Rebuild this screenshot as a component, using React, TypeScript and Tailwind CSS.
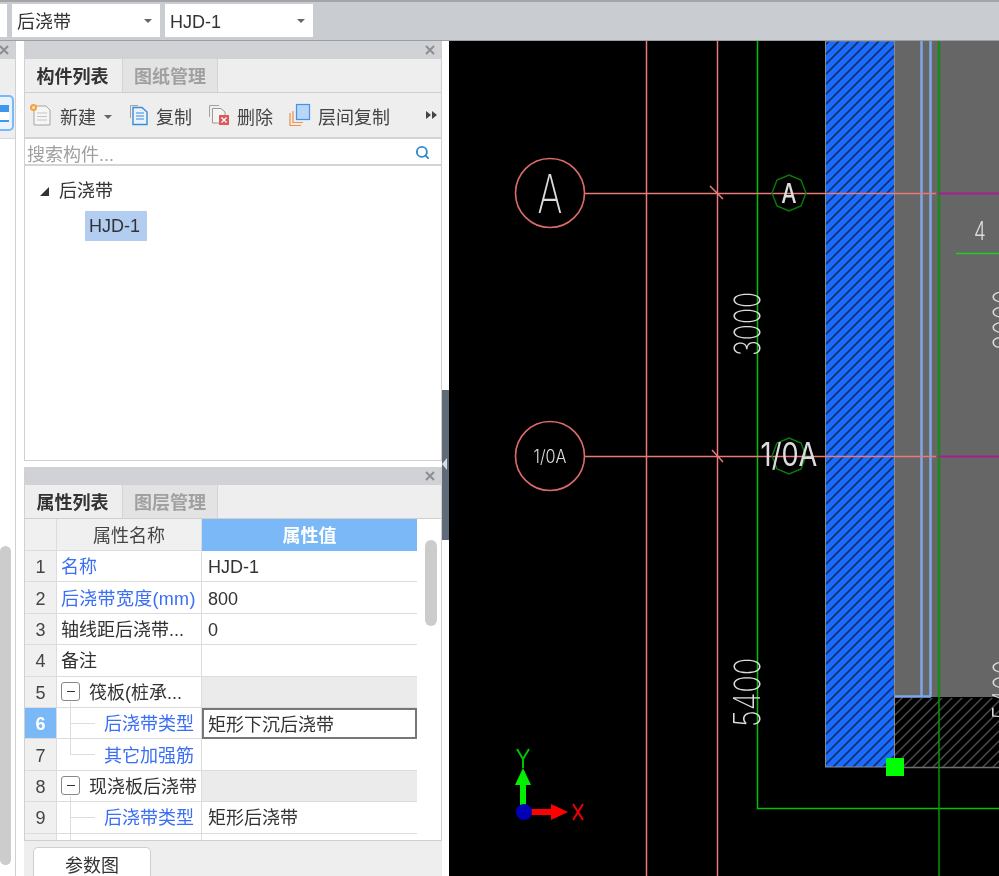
import React from 'react';
import { Search } from 'lucide-react';

const Close = () => (
    <svg width="10" height="10" viewBox="0 0 10 10" className="shrink-0">
        <path d="M1 1 L9 9 M9 1 L1 9" stroke="#8b8e93" strokeWidth="2" />
    </svg>
);

const Caret = () => <span className="w-0 h-0 border-x-[4px] border-x-transparent border-t-[4px] border-t-[#666]" />;

const Combo = ({ label, className }: { label: string, className: string }) => (
    <div className={`h-[33px] bg-white flex items-center justify-between pl-[5px] pr-[8px] text-[#333] ${className}`}>
        <span className="pt-[2px]">{label}</span>
        <Caret />
    </div>
);

const NewIcon = () => (
    <svg width="24" height="24" viewBox="0 0 24 24">
        <path d="M5 3 H17 L21 7 V22 H5 Z" fill="#f6f6f6" stroke="#a4a4a4" />
        <path d="M8 10 H18 M8 13.5 H18 M8 17 H18" stroke="#c4c4c4" />
        <circle cx="4.5" cy="4.5" r="3.5" fill="#f3a23c" />
        <circle cx="4.5" cy="4.5" r="1.5" fill="#fde6b0" />
    </svg>
);

const CopyIcon = () => (
    <svg width="20" height="22" viewBox="0 0 20 22">
        <path d="M1.5 14 V1.5 H9" fill="none" stroke="#9aa3ad" />
        <path d="M4 3.5 H13 L18 8 V20.5 H4 Z" fill="#eaf3fc" stroke="#3b8bd9" strokeWidth="1.4" />
        <path d="M7 9 H15 M7 12 H15 M7 15 H15" stroke="#3b8bd9" />
    </svg>
);

const DeleteIcon = () => (
    <svg width="22" height="22" viewBox="0 0 22 22">
        <path d="M1.5 13 V1.5 H11" fill="none" stroke="#a0a4a8" />
        <path d="M4.5 4.5 H13 L17 8 V19 H4.5 Z" fill="#f4f4f4" stroke="#9a9a9a" />
        <rect x="11" y="11" width="10" height="10" fill="#dd5a5a" />
        <path d="M13.5 13.5 L18.5 18.5 M18.5 13.5 L13.5 18.5" stroke="#fff" strokeWidth="1.3" />
    </svg>
);

const FloorCopyIcon = () => (
    <svg width="22" height="24" viewBox="0 0 22 24">
        <path d="M1 10 V22.5 H12" fill="none" stroke="#f0904a" strokeWidth="1.2" />
        <path d="M4 8 V19.5 H14" fill="none" stroke="#f0904a" strokeWidth="1.2" />
        <rect x="7.5" y="1.5" width="13" height="15" fill="#b7d6fb" stroke="#4a90e2" strokeWidth="1.2" />
    </svg>
);

const ToolItem = ({ icon, label, className }: { icon: React.ReactNode, label: string, className: string }) => (
    <div className={`flex items-center ${className}`}>
        {icon}
        <span className="ml-[7px] pt-[5px] text-[#444]">{label}</span>
    </div>
);

const PanelTabs = ({ active, other }: { active: string, other: string }) => (
    <div className="h-[34px] bg-[#eeeeee] border-b border-[#cfcfcf] flex">
        <div className="w-[95px] pt-[2px] flex items-center justify-center font-bold text-[#333]">{active}</div>
        <div className="ml-[2px] w-[96px] pt-[2px] bg-[#e3e3e3] border-x border-[#d4d4d4] flex items-center justify-center font-bold text-[#a0a0a0]">{other}</div>
    </div>
);

const TitleBar = () => (
    <div className="h-[18px] bg-[#d0d2d6] flex items-center justify-end pr-[6px]">
        <Close />
    </div>
);

type Row = {
    name?: string;
    value?: string;
    blue?: boolean;
    kind?: 'group' | 'child' | 'lastChild';
    active?: boolean;
};

const rows: Row[] = [
    { name: '名称', value: 'HJD-1', blue: true },
    { name: '后浇带宽度(mm)', value: '800', blue: true },
    { name: '轴线距后浇带...', value: '0' },
    { name: '备注' },
    { name: '筏板(桩承...', kind: 'group' },
    { name: '后浇带类型', value: '矩形下沉后浇带', blue: true, kind: 'child', active: true },
    { name: '其它加强筋', blue: true, kind: 'lastChild' },
    { name: '现浇板后浇带', kind: 'group' },
    { name: '后浇带类型', value: '矩形后浇带', blue: true, kind: 'child' },
    { kind: 'child' },
];

const TableRow = ({ row, index }: { row: Row, index: number }) => {
    const group = row.kind === 'group';
    const nested = row.kind === 'child' || row.kind === 'lastChild';
    return (
        <div className="h-[31.4px] shrink-0 flex">
            <div className={`w-[32px] shrink-0 pt-[2px] border-r border-b border-[#dcdcdc] flex items-center justify-center ${row.active ? 'bg-[#7ab8f8] text-white font-bold' : 'bg-[#f0f0f0] text-[#444]'}`}>
                {row.name ? index + 1 : ''}
            </div>
            <div className={`relative w-[145px] shrink-0 border-r border-b border-[#dcdcdc] flex items-center whitespace-nowrap ${row.blue ? 'text-[#3b6ef5]' : 'text-[#333]'} ${nested ? 'pl-[47px]' : 'pl-[4px]'}`}>
                {group && (
                    <span className="mr-[9px] w-[19px] h-[19px] shrink-0 rounded-[3px] border border-[#888] flex items-center justify-center">
                        <span className="w-[8px] h-px bg-[#333]" />
                    </span>
                )}
                {group && <span className="absolute left-[13px] top-[25px] h-[7px] w-px bg-[#dddddd]" />}
                {nested && (
                    <>
                        <span className={`absolute left-[13px] top-0 w-px bg-[#dddddd] ${row.kind === 'lastChild' ? 'h-[16px]' : 'h-full'}`} />
                        {row.name && <span className="absolute left-[13px] top-[15px] h-px w-[25px] bg-[#dddddd]" />}
                    </>
                )}
                <span className={`pt-[2px] ${row.name === '后浇带宽度(mm)' ? 'tracking-[0.3px]' : ''}`}>{row.name}</span>
            </div>
            <div className={`w-[215px] shrink-0 flex items-center text-[#333] whitespace-nowrap ${group ? 'bg-[#ebebeb]' : 'bg-white'} ${row.active ? 'border-2 border-[#777777] pl-[4px]' : 'border-b border-[#dcdcdc] pl-[6px]'}`}>
                <span className="pt-[2px]">{row.value}</span>
            </div>
        </div>
    );
};

const Cad = () => (
    <svg viewBox="449 41 550 835" className="w-full h-full block">
        <defs>
            <pattern id="hatchBlue" patternUnits="userSpaceOnUse" width="10" height="10">
                <rect width="10" height="10" fill="#1a6cff" />
                <path d="M-1 1 L1 -1 M0 10 L10 0 M9 11 L11 9" stroke="#14306a" strokeWidth="1.7" />
            </pattern>
            <pattern id="hatchDark" patternUnits="userSpaceOnUse" width="10" height="10">
                <path d="M-1 1 L1 -1 M0 10 L10 0 M9 11 L11 9" stroke="#4a4a4a" strokeWidth="1.5" />
            </pattern>
        </defs>

        <rect x="895" y="41" width="104" height="656" fill="#666666" />
        <rect x="825.5" y="41" width="69" height="726" fill="url(#hatchBlue)" stroke="#8a8a8a" />
        <rect x="895" y="698" width="104" height="69" fill="url(#hatchDark)" />
        <path d="M894 767.5 H999" stroke="#6e6e6e" strokeWidth="1.5" />
        <path d="M921.5 41 V697 M930.5 41 V697 M895 696.5 H931" stroke="#7fa6e8" strokeWidth="2.5" fill="none" />

        <path d="M646.5 41 V876 M717.5 41 V876" stroke="#e87a7a" strokeWidth="1.5" />
        <path d="M757.5 41 V808.5 H999" stroke="#00c000" strokeWidth="1.5" fill="none" />
        <path d="M939 41 V697" stroke="#178a17" strokeWidth="2.5" />
        <path d="M939 697 V876" stroke="#009a00" strokeWidth="1.5" />
        <path d="M956 253.5 H999" stroke="#22cc22" strokeWidth="1.6" />

        <path d="M585 193.5 H936 M585 456.5 H936" stroke="#e87a7a" strokeWidth="1.6" />
        <path d="M938 193.5 H999 M938 456.5 H999" stroke="#a5208f" strokeWidth="1.8" />
        <path d="M710 186 L723 199 M712 450 L723 462" stroke="#e87a7a" strokeWidth="1.5" />
        <circle cx="550" cy="193" r="34.5" fill="none" stroke="#dc6c6c" strokeWidth="1.6" />
        <circle cx="550" cy="456" r="34.5" fill="none" stroke="#dc6c6c" strokeWidth="1.6" />
        <path d="M789 175 L801 180 L806 193 L801 206 L789 211 L777 206 L772 193 L777 180 Z" fill="none" stroke="#0a7a0a" strokeWidth="1.4" />
        <path d="M789 438 L801 443 L806 456 L801 469 L789 474 L777 469 L772 456 L777 443 Z" fill="none" stroke="#0a7a0a" strokeWidth="1.4" />

        <g fill="#dcdcdc" className="font-['Inter',sans-serif]">
            <text x="550" y="213" textAnchor="middle" fontSize="54" fontWeight="200" transform="translate(550 0) scale(0.7 1) translate(-550 0)">A</text>
            <text x="550" y="463" textAnchor="middle" fontSize="18" fontWeight="300" transform="translate(550 0) scale(0.9 1) translate(-550 0)">1/0A</text>
            <text x="789" y="203" textAnchor="middle" fontSize="27" fontWeight="500" transform="translate(789 0) scale(0.8 1) translate(-789 0)">A</text>
            <text x="789" y="466" textAnchor="middle" fontSize="32" fontWeight="400" transform="translate(789 0) scale(0.85 1) translate(-789 0)">1/0A</text>
            <text x="980" y="240" textAnchor="middle" fontSize="26" fontWeight="300" transform="translate(980 0) scale(0.72 1) translate(-980 0)">4</text>
            <text transform="translate(760 356) rotate(-90) scale(0.74 1)" fontSize="36" fontWeight="200">3000</text>
            <text transform="translate(760 727) rotate(-90) scale(0.8 1)" fontSize="36" fontWeight="200">5400</text>
            <text transform="translate(1019 350) rotate(-90) scale(0.7 1)" fontSize="36" fontWeight="200">3000</text>
            <text transform="translate(1019 720) rotate(-90) scale(0.7 1)" fontSize="36" fontWeight="200">5400</text>
        </g>

        <rect x="886" y="758" width="18" height="18" fill="#00ff00" />

        <path d="M523 805 V782" stroke="#00f000" strokeWidth="6" />
        <path d="M523 768 L531 785 H515 Z" fill="#00f000" />
        <path d="M517 749 L523 759 L529 749 M523 759 V768" fill="none" stroke="#00c000" strokeWidth="2" />
        <path d="M530 812 H553" stroke="#ff0000" strokeWidth="6" />
        <path d="M568 812 L551 804 V820 Z" fill="#ff0000" />
        <circle cx="524" cy="812" r="8" fill="#0000b4" />
        <path d="M573 804 L583 820 M583 804 L573 820" stroke="#f00000" strokeWidth="2" />
    </svg>
);

export default function App() {
    return (
        <div className="w-[999px] h-[876px] overflow-hidden flex flex-col bg-white text-[18px] leading-none blur-[0.4px] font-['Liberation_Sans','Noto_Sans_CJK_SC',sans-serif]">
            <div className="h-[41px] shrink-0 bg-[#c9ccd1] border-t-[2px] border-t-[#a3a5a8] border-b border-b-[#9c9ea1] flex items-center gap-[5px] pb-[1px]">
                <div className="w-[7px] h-[33px] bg-white" />
                <Combo label="后浇带" className="w-[148px]" />
                <Combo label="HJD-1" className="w-[148px]" />
            </div>

            <div className="flex-1 min-h-0 flex">
                <div className="w-[16px] shrink-0 border-r border-[#d0d0d0] flex flex-col overflow-hidden">
                    <div className="h-[18px] bg-[#d0d2d6] flex items-center justify-end pr-[6px]">
                        <Close />
                    </div>
                    <div className="h-[80px] bg-[#eeeeee] border-b border-[#d8d8d8] pt-[37px]">
                        <div className="w-[14px] h-[36px] -mt-[1px] rounded-r-[5px] border-2 border-l-0 border-[#7ab8f8] bg-[#e8f3fe] flex flex-col justify-center">
                            <div className="w-[9px] h-[17px] border-t-[7px] border-t-[#3f97ec] border-b-2 border-b-[#3f97ec] bg-white" />
                        </div>
                    </div>
                    <div className="mt-[407px] w-[11px] h-[319px] rounded-full bg-[#cccccc]" />
                </div>

                <div className="w-[8px] shrink-0" />

                <div className="w-[418px] shrink-0 flex flex-col">
                    <div className="h-[419px] shrink-0 flex flex-col border-x border-[#d0d0d0]">
                        <TitleBar />
                        <PanelTabs active="构件列表" other="图纸管理" />
                        <div className="h-[46px] bg-[#eeeeee] border-b-2 border-[#d4d4d6] flex items-center">
                            <ToolItem icon={<NewIcon />} label="新建" className="ml-[4px]" />
                            <span className="ml-[8px] flex pt-[3px]"><Caret /></span>
                            <ToolItem icon={<CopyIcon />} label="复制" className="ml-[17px]" />
                            <ToolItem icon={<DeleteIcon />} label="删除" className="ml-[16px]" />
                            <ToolItem icon={<FloorCopyIcon />} label="层间复制" className="ml-[16px]" />
                            <div className="ml-[36px] flex">
                                <span className="w-0 h-0 border-y-[4px] border-y-transparent border-l-[5px] border-l-[#444]" />
                                <span className="ml-[1px] w-0 h-0 border-y-[4px] border-y-transparent border-l-[5px] border-l-[#444]" />
                            </div>
                        </div>
                        <div className="h-[27px] bg-white border-b-2 border-[#d4d4d6] flex items-center justify-between pl-[2px] pr-[11px]">
                            <span className="pt-[7px] text-[#a0a0a0]">搜索构件...</span>
                            <Search size={15} strokeWidth={3} className="mt-[2px] text-[#2d8cc8]" />
                        </div>
                        <div className="flex-1 bg-white pl-[15px] pt-[16px]">
                            <div className="flex items-center h-[18px]">
                                <span className="w-0 h-0 border-l-[9px] border-l-transparent border-b-[9px] border-b-[#333]" />
                                <span className="ml-[10px] text-[#333]">后浇带</span>
                            </div>
                            <div className="mt-[11px] ml-[45px] w-[62px] h-[30px] bg-[#b3cdf0] flex items-center pl-[4px] text-[#333]">HJD-1</div>
                        </div>
                    </div>

                    <div className="h-[7px] shrink-0 border-t border-[#d0d0d0]" />

                    <div className="h-[374px] shrink-0 flex flex-col border-x border-b border-[#d0d0d0]">
                        <TitleBar />
                        <PanelTabs active="属性列表" other="图层管理" />
                        <div className="flex-1 min-h-0 flex overflow-hidden">
                            <div className="w-[392px] shrink-0 flex flex-col overflow-hidden">
                                <div className="h-[32px] shrink-0 flex">
                                    <div className="w-[32px] bg-[#f0f0f0] border-r border-b border-[#dcdcdc]" />
                                    <div className="w-[145px] pt-[2px] bg-[#f0f0f0] border-r border-b border-[#dcdcdc] flex items-center justify-center text-[#444]">属性名称</div>
                                    <div className="w-[215px] pt-[2px] bg-[#7ab8f8] flex items-center justify-center text-white font-bold">属性值</div>
                                </div>
                                {rows.map((row, i) => <TableRow key={i} row={row} index={i} />)}
                            </div>
                            <div className="flex-1 pl-[8px] pt-[21px]">
                                <div className="w-[12px] h-[86px] rounded-full bg-[#cccccc]" />
                            </div>
                        </div>
                    </div>

                    <div className="flex-1 bg-[#eeeeee] pl-[9px] pt-[6px]">
                        <div className="w-[118px] h-[40px] bg-white border border-[#cfcfcf] rounded-t-[5px] flex items-center justify-center text-[#333] pb-[3px]">参数图</div>
                    </div>
                </div>

                <div className="w-[7px] shrink-0">
                    <div className="relative mt-[349px] h-[150px] bg-[#5f6b78]">
                        <span className="absolute left-0 top-[68px] w-0 h-0 border-y-[6px] border-y-transparent border-r-[5px] border-r-[#d8dde2]" />
                    </div>
                </div>

                <div className="flex-1 min-w-0 bg-black">
                    <Cad />
                </div>
            </div>
        </div>
    );
}
